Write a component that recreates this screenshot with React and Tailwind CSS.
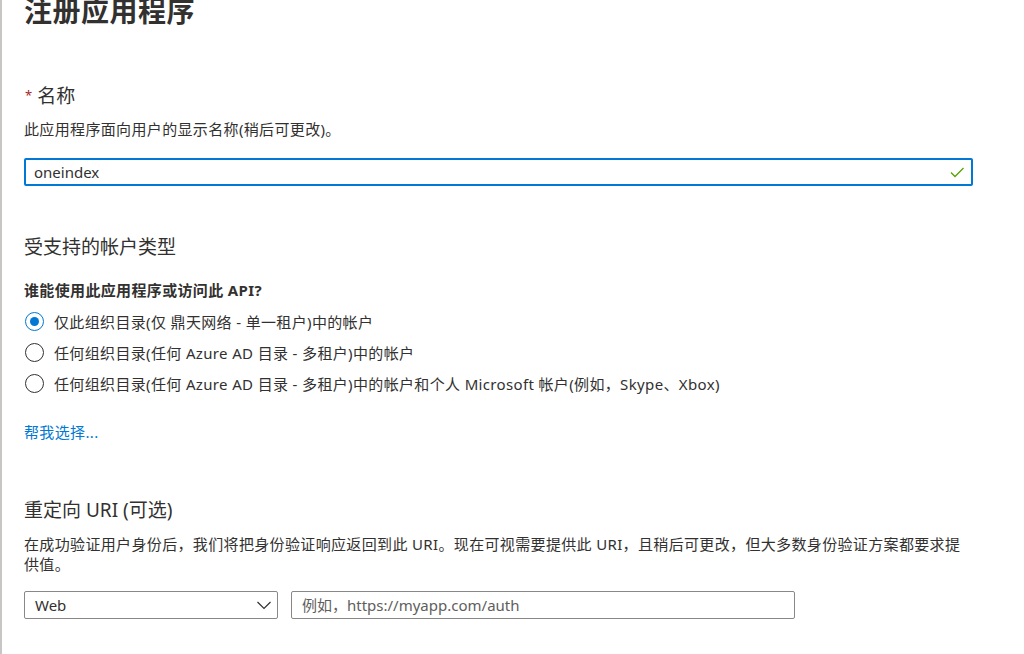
import React from "react";

const font = { fontFamily: '"Noto Sans", "Noto Sans CJK SC", sans-serif' };

function Radio({ checked, children }) {
  return (
    <div className="flex items-center h-[31px]">
      <div className="w-[19px] h-[19px] ml-[1px] rounded-full border border-[#323130] flex items-center justify-center shrink-0"
        style={checked ? { borderColor: "#0078d4" } : undefined}>
        {checked && <div className="w-[9px] h-[9px] rounded-full bg-[#0078d4]" />}
      </div>
      <span className="ml-[10px] text-[15px] leading-[20px] tracking-[0.35px] text-[#323130]">{children}</span>
    </div>
  );
}

export default function App() {
  return (
    <div className="w-[1024px] h-[654px] overflow-hidden bg-white border-l-2 border-[#c8c6c4] pl-[22px] flex flex-col" style={font}>
      <h1 className="mt-[-3px] text-[28px] leading-[28px] font-bold tracking-[0.5px] text-[#323130]">注册应用程序</h1>

      <div className="mt-[59px] flex items-start h-[24px] text-[19px] leading-[24px] text-[#323130]">
        <span className="text-[#a4262c] text-[13px] leading-[13px] mt-[5px] ml-[1px]">*</span>
        <span className="ml-[5px]">名称</span>
      </div>
      <p className="mt-[11px] text-[15px] leading-[20px] tracking-[0.35px] text-[#323130]">此应用程序面向用户的显示名称(稍后可更改)。</p>

      <div className="mt-[19px] w-[949px] h-[28px] border-2 border-[#0078d4] rounded-[2px] flex items-center pl-[8px] pr-[4px]">
        <span className="flex-1 text-[15px] text-[#323130]">oneindex</span>
        <svg width="16" height="16" viewBox="0 0 16 16" className="mr-[2px]">
          <path d="M2 8.5 L6 12.5 L14.5 4" fill="none" stroke="#57a300" strokeWidth="1.3" />
        </svg>
      </div>

      <h2 className="mt-[49px] text-[19px] leading-[24px] text-[#323130]">受支持的帐户类型</h2>
      <p className="mt-[21px] text-[15px] leading-[20px] font-bold tracking-[0.35px] text-[#323130]">谁能使用此应用程序或访问此 API?</p>

      <div className="mt-[6px] flex flex-col">
        <Radio checked>仅此组织目录(仅 鼎天网络 - 单一租户)中的帐户</Radio>
        <Radio>任何组织目录(任何 Azure AD 目录 - 多租户)中的帐户</Radio>
        <Radio>任何组织目录(任何 Azure AD 目录 - 多租户)中的帐户和个人 Microsoft 帐户(例如，Skype、Xbox)</Radio>
      </div>

      <a className="mt-[23px] text-[15px] leading-[20px] tracking-[0.35px] text-[#0078d4]">帮我选择...</a>

      <h2 className="mt-[56px] text-[19px] leading-[24px] text-[#323130]">重定向 URI (可选)</h2>
      <p className="mt-[12px] w-[940px] text-[15px] leading-[20px] tracking-[0.35px] text-[#323130]">
        在成功验证用户身份后，我们将把身份验证响应返回到此 URI。现在可视需要提供此 URI，且稍后可更改，但大多数身份验证方案都要求提供值。
      </p>

      <div className="mt-[17px] flex gap-[13px]">
        <div className="w-[254px] h-[28px] border border-[#8a8886] rounded-[2px] flex items-center pl-[10px] pr-[5px]">
          <span className="flex-1 text-[15px] text-[#323130]">Web</span>
          <svg width="16" height="16" viewBox="0 0 16 16">
            <path d="M1.5 5 L8 11.5 L14.5 5" fill="none" stroke="#323130" strokeWidth="1.2" />
          </svg>
        </div>
        <div className="w-[504px] h-[28px] border border-[#8a8886] rounded-[2px] flex items-center pl-[10px]">
          <span className="text-[15px] text-[#605e5c]">例如，https://myapp.com/auth</span>
        </div>
      </div>
    </div>
  );
}
